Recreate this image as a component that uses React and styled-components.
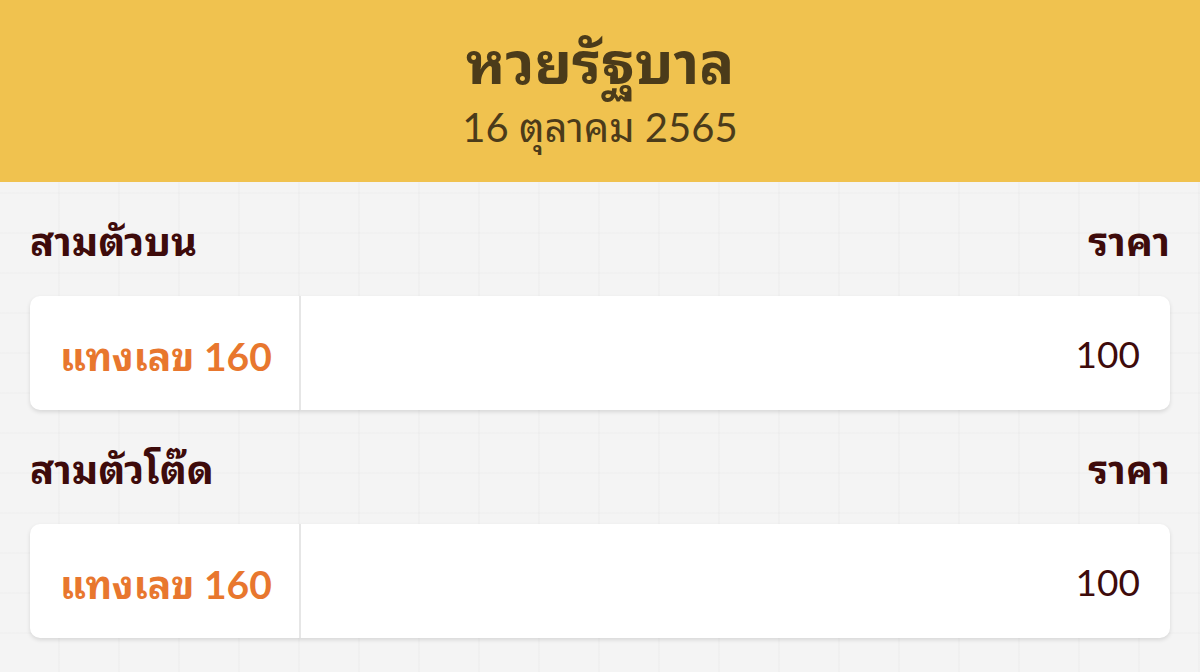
import React from 'react';
import styled, { createGlobalStyle } from 'styled-components';

const GlobalStyle = createGlobalStyle`
  html, body {
    margin: 0;
    padding: 0;
  }
  body {
    font-family: Lato, "Noto Sans Thai Looped", Loma, Garuda, Kinnari, "Noto Sans Thai", sans-serif;
    background: #f4f4f4;
  }
`;

const Page = styled.div`
  width: 1200px;
  min-height: 672px;
  background-color: #f4f4f4;
  background-image:
    repeating-linear-gradient(90deg, transparent 0 58px, rgba(0, 0, 0, 0.015) 58px 60px),
    repeating-linear-gradient(0deg, transparent 0 38px, rgba(0, 0, 0, 0.012) 38px 40px);
`;

const Header = styled.header`
  height: 182px;
  box-sizing: border-box;
  padding-top: 30px;
  background: #f0c24f;
  display: flex;
  flex-direction: column;
  align-items: center;
  color: #4b3b1a;
`;

const Title = styled.h1`
  margin: 0;
  font-size: 58px;
  font-weight: 700;
  line-height: 64px;
`;

const Subtitle = styled.div`
  margin-top: 9px;
  font-size: 40px;
  line-height: 48px;
`;

const Body = styled.main`
  padding: 0 30px;
`;

const LabelRow = styled.div`
  height: 114px;
  display: flex;
  align-items: center;
  justify-content: space-between;
  padding-bottom: 2px;
  box-sizing: border-box;
  color: #3e0b0b;
  font-size: 40px;
  font-weight: 700;
`;

const Card = styled.div`
  height: 114px;
  background: #fff;
  border-radius: 10px;
  box-shadow: 0 2px 4px rgba(0, 0, 0, 0.12);
  display: flex;
  align-items: center;
`;

const BetCell = styled.div`
  width: 271px;
  height: 100%;
  box-sizing: border-box;
  padding-left: 30px;
  display: flex;
  align-items: center;
  border-right: 2px solid #e6e6e6;
  color: #e8772e;
  font-size: 39px;
  font-weight: 700;
`;

const PriceCell = styled.div`
  flex: 1;
  text-align: right;
  padding-right: 30px;
  color: #3e0b0b;
  font-size: 37px;
`;

const sections = [
  { label: 'สามตัวบน', number: '160', price: '100' },
  { label: 'สามตัวโต๊ด', number: '160', price: '100' },
];

const App = () => (
  <Page>
    <GlobalStyle />
    <Header>
      <Title>หวยรัฐบาล</Title>
      <Subtitle>16 ตุลาคม 2565</Subtitle>
    </Header>
    <Body>
      {sections.map((s) => (
        <section key={s.label}>
          <LabelRow>
            <span>{s.label}</span>
            <span>ราคา</span>
          </LabelRow>
          <Card>
            <BetCell>แทงเลข {s.number}</BetCell>
            <PriceCell>{s.price}</PriceCell>
          </Card>
        </section>
      ))}
    </Body>
  </Page>
);

export default App;
